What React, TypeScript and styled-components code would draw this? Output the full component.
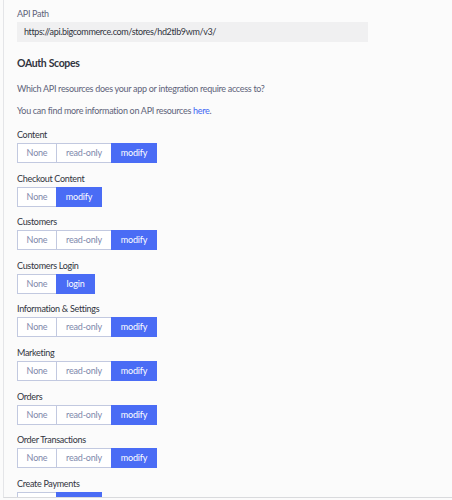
import React from "react";
import styled, { createGlobalStyle } from "styled-components";

const Global = createGlobalStyle`
  html, body { margin: 0; padding: 0; background: #fbfbfb; }
  body { font-family: Lato, "Open Sans", sans-serif; color: #313440; letter-spacing: -0.3px; }
  * { box-sizing: border-box; }
`;

const Page = styled.div`
  width: 452px;
  height: 500px;
  padding-left: 3px;
  background: #fbfbfb;
`;

const Panel = styled.div`
  height: 498px;
  border-left: 1px solid #e4e5e8;
  border-bottom: 1px solid #d9dadd;
  padding: 7px 0 0 13px;
  overflow: hidden;
`;

const FieldLabel = styled.div`
  font-size: 9px;
  line-height: 14px;
  color: #5e637a;
`;

const PathBox = styled.div`
  margin-top: 1px;
  width: 351px;
  height: 20px;
  line-height: 20px;
  padding-left: 7px;
  background: #f0f0f1;
  font-size: 9px;
  letter-spacing: -0.35px;
  color: #313440;
`;

const Heading = styled.h2`
  margin: 13px 0 0;
  font-size: 10.5px;
  line-height: 16px;
  font-weight: 700;
  letter-spacing: -0.35px;
  color: #313440;
`;

const Text = styled.p<{ $mt: number }>`
  margin: ${(p) => p.$mt}px 0 0;
  font-size: 9px;
  line-height: 14px;
  color: #5e637a;
`;

const Link = styled.a`
  color: #3c64f4;
  text-decoration: none;
`;

const Scopes = styled.div`
  margin-top: 10px;
  display: flex;
  flex-direction: column;
  gap: 8.6px;
`;

const Group = styled.div`
  display: flex;
  flex-direction: column;
  align-items: flex-start;
  gap: 1px;
`;

const ScopeLabel = styled.div`
  font-size: 9px;
  line-height: 14px;
  color: #313440;
`;

const Segmented = styled.div`
  display: flex;
  height: 20px;
`;

const SegButton = styled.button<{ $active: boolean; $w: number }>`
  width: ${(p) => p.$w}px;
  height: 20px;
  padding: 0;
  margin: 0 0 0 -1px;
  font-family: Lato, "Open Sans", sans-serif;
  font-size: 9px;
  letter-spacing: -0.2px;
  line-height: 18px;
  border: 1px solid ${(p) => (p.$active ? "#4a6cf5" : "#c2c9e0")};
  background: ${(p) => (p.$active ? "#4a6cf5" : "#ffffff")};
  color: ${(p) => (p.$active ? "#ffffff" : "#8088ab")};
  &:first-child { margin-left: 0; }
`;

const widths: Record<string, number> = {
  None: 40,
  "read-only": 55,
  modify: 45,
  login: 38,
};

type Scope = { name: string; options: string[] };

const scopes: Scope[] = [
  { name: "Content", options: ["None", "read-only", "modify"] },
  { name: "Checkout Content", options: ["None", "modify"] },
  { name: "Customers", options: ["None", "read-only", "modify"] },
  { name: "Customers Login", options: ["None", "login"] },
  { name: "Information & Settings", options: ["None", "read-only", "modify"] },
  { name: "Marketing", options: ["None", "read-only", "modify"] },
  { name: "Orders", options: ["None", "read-only", "modify"] },
  { name: "Order Transactions", options: ["None", "read-only", "modify"] },
  { name: "Create Payments", options: ["None", "modify"] },
];

export default function App() {
  return (
    <Page>
      <Global />
      <Panel>
        <FieldLabel>API Path</FieldLabel>
        <PathBox>https://api.bigcommerce.com/stores/hd2tlb9wm/v3/</PathBox>
        <Heading>OAuth Scopes</Heading>
        <Text $mt={11}>Which API resources does your app or integration require access to?</Text>
        <Text $mt={8}>
          You can find more information on API resources <Link href="#">here</Link>.
        </Text>
        <Scopes>
          {scopes.map((s) => (
            <Group key={s.name}>
              <ScopeLabel>{s.name}</ScopeLabel>
              <Segmented>
                {s.options.map((o, i) => (
                  <SegButton key={o} $w={widths[o] + (i > 0 ? 1 : 0)} $active={i === s.options.length - 1}>
                    {o}
                  </SegButton>
                ))}
              </Segmented>
            </Group>
          ))}
        </Scopes>
      </Panel>
    </Page>
  );
}
